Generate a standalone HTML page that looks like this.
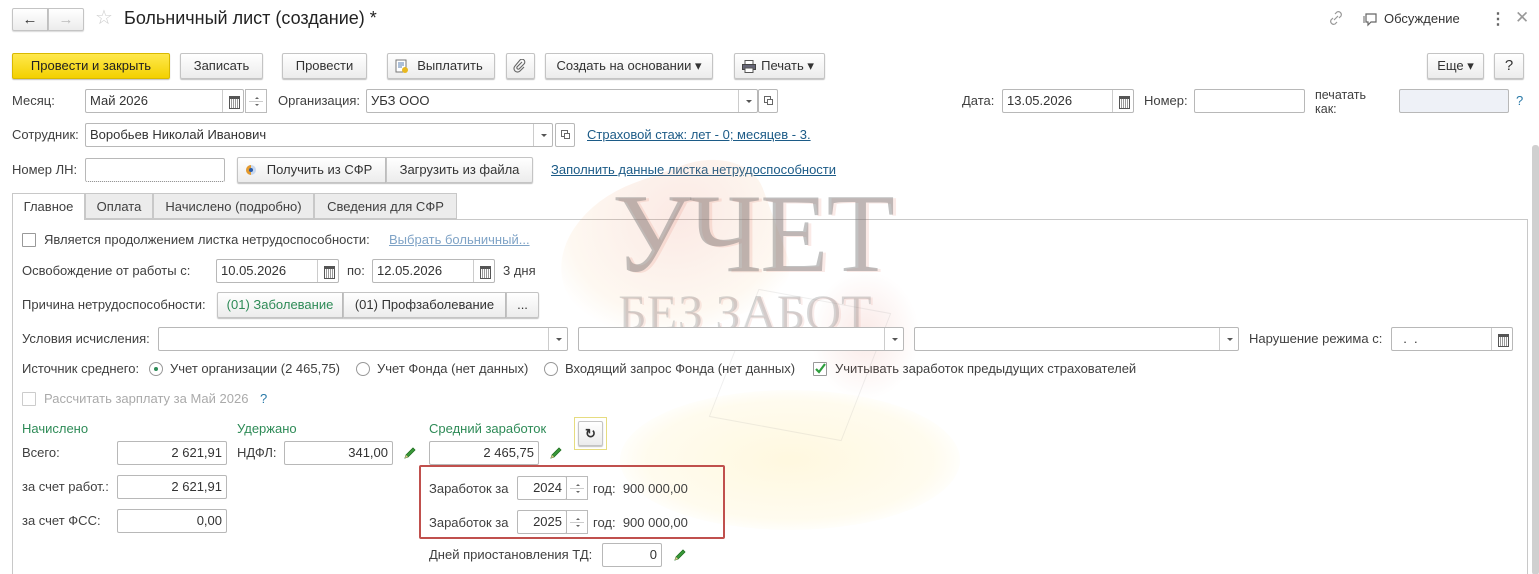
<!DOCTYPE html>
<html><head><meta charset="utf-8">
<style>
*{box-sizing:border-box;margin:0;padding:0}
html,body{width:1539px;height:574px;overflow:hidden}
body{background:#fff;font-family:"Liberation Sans",Arial,sans-serif;font-size:13px;color:#404040;position:relative}
.a{position:absolute;white-space:nowrap}
.l{position:absolute;white-space:nowrap;line-height:16px}
.in{position:absolute;height:24px;border:1px solid #b8b8b8;border-radius:2px;background:#fff;padding:0 4px;line-height:22px;color:#333;z-index:2}
.in.r{text-align:right}
.btn{position:absolute;height:26px;border:1px solid #c4c4c4;border-radius:2px;background:linear-gradient(#fff,#ececec);box-shadow:0 1px 1px rgba(0,0,0,.25);text-align:center;line-height:24px;color:#333;z-index:2}
.dd{position:absolute;top:0;right:0;width:19px;height:22px;border-left:1px solid #ccc}
.dd:after{content:"";position:absolute;left:7px;top:10px;border:3px solid transparent;border-top:3px solid #555}
.cal{position:absolute;top:0;right:0;width:21px;height:22px;border-left:1px solid #ccc}
.cal:before{content:"";position:absolute;left:6px;top:6px;width:9px;height:9px;border:1px solid #555;border-top:3px solid #555;background:repeating-linear-gradient(90deg,#fff 0 1px,#999 1px 2px)}
.lnk{color:#1c5b87;text-decoration:underline}
.grn{color:#2e8b57}
.cb{position:absolute;width:14px;height:14px;border:1px solid #999;background:#fff;border-radius:1px;z-index:2}
.rad{position:absolute;width:14px;height:14px;border:1px solid #999;border-radius:50%;background:#fff;z-index:2}
.spin{position:absolute;width:22px;height:24px;border:1px solid #bbb;background:#fff;z-index:2}
.spin:before{content:"";position:absolute;left:9px;top:5px;border:2px solid transparent;border-bottom:2px solid #666}
.spin:after{content:"";position:absolute;left:9px;top:14px;border:2px solid transparent;border-top:2px solid #666}
.spin i{position:absolute;left:3px;right:3px;top:11px;border-top:1px solid #ccc}
.pen{position:absolute;width:14px;height:14px;z-index:2}
.wm{position:absolute;z-index:1;pointer-events:none}
</style></head><body>

<!-- watermark -->
<div class="wm" style="left:620px;top:390px;width:340px;height:140px;border-radius:50%;background:radial-gradient(ellipse,rgba(255,232,150,.3),rgba(255,225,120,.12) 60%,rgba(255,255,255,0) 75%)"></div>
<div class="wm" style="left:560px;top:175px;width:220px;height:160px;border-radius:60% 40% 30% 70%;background:radial-gradient(ellipse at 60% 30%,rgba(230,120,90,.16),rgba(240,170,80,.08) 60%,rgba(255,255,255,0) 75%);transform:rotate(-20deg)"></div>
<div class="wm" style="left:810px;top:270px;width:110px;height:130px;border-radius:50%;background:radial-gradient(ellipse,rgba(220,110,90,.15),rgba(255,255,255,0) 70%)"></div>
<div class="wm" style="left:730px;top:300px;width:140px;height:130px;border:1px solid rgba(150,150,150,.15);transform:skewX(-12deg) rotate(10deg)"></div>
<div class="wm" style="left:612px;top:170px;font-family:'Liberation Serif',serif;font-size:112px;color:rgba(120,120,120,.45);letter-spacing:-2px;text-shadow:3px 1px 0 rgba(210,80,60,.12)">УЧЕТ</div>
<div class="wm" style="left:618px;top:283px;font-family:'Liberation Serif',serif;font-size:50px;color:rgba(140,140,140,.35);text-shadow:2px 1px 0 rgba(210,80,60,.1)">БЕЗ ЗАБОТ</div>

<!-- title bar -->
<div class="btn" style="left:12px;top:8px;width:36px;height:23px;line-height:21px;font-size:15px;border-radius:2px 0 0 2px;box-shadow:0 1px 1px rgba(0,0,0,.15)">&#8592;</div>
<div class="btn" style="left:48px;top:8px;width:36px;height:23px;line-height:21px;font-size:15px;color:#bbb;border-radius:0 2px 2px 0;box-shadow:0 1px 1px rgba(0,0,0,.15)">&#8594;</div>
<div class="a" style="left:95px;top:5px;font-size:20px;color:#ccc">&#9734;</div>
<div class="a" style="left:124px;top:8px;font-size:18px;color:#222">Больничный лист (создание) *</div>
<svg class="a" style="left:1328px;top:10px" width="16" height="16" viewBox="0 0 16 16"><path d="M6 10l4-4M7 4l2-2a3 3 0 014 4l-2 2M9 12l-2 2a3 3 0 01-4-4l2-2" stroke="#999" fill="none" stroke-width="1.2"/></svg>
<svg class="a" style="left:1362px;top:11px" width="16" height="16" viewBox="0 0 16 16"><path d="M4 3h10v8H9l-3 3v-3H4z" stroke="#666" fill="none" stroke-width="1.2"/><path d="M2 5v7" stroke="#666"/></svg>
<div class="a" style="left:1384px;top:11px;color:#333">Обсуждение</div>
<div class="a" style="left:1490px;top:9px;font-size:16px;color:#666;font-weight:bold">&#8942;</div>
<div class="a" style="left:1515px;top:8px;font-size:17px;color:#999">&#10005;</div>

<!-- toolbar -->
<div class="btn" style="left:12px;top:53px;width:158px;background:linear-gradient(#ffe84d,#f3d100);border-color:#d9b900;color:#222">Провести и закрыть</div>
<div class="btn" style="left:180px;top:53px;width:83px">Записать</div>
<div class="btn" style="left:282px;top:53px;width:85px">Провести</div>
<div class="btn" style="left:387px;top:53px;width:108px;padding-left:18px">Выплатить</div>
<svg class="a" style="left:395px;top:59px;z-index:3" width="14" height="15" viewBox="0 0 14 15"><rect x="1" y="1" width="10" height="12" fill="#fff" stroke="#777"/><path d="M3 4h6M3 6h6M3 8h4" stroke="#5a7fb0"/><circle cx="10" cy="11" r="3" fill="#e8b820"/></svg>
<div class="btn" style="left:506px;top:53px;width:29px"></div>
<svg class="a" style="left:513px;top:59px;z-index:3" width="14" height="14" viewBox="0 0 14 14"><path d="M9 3L4 8a1.5 1.5 0 002 2l5-5a2.5 2.5 0 00-4-4L2 7a3.5 3.5 0 005 5l4-4" stroke="#666" fill="none" stroke-width="1.1"/></svg>
<div class="btn" style="left:545px;top:53px;width:168px">Создать на основании &#9662;</div>
<div class="btn" style="left:734px;top:53px;width:91px;padding-left:16px">Печать &#9662;</div>
<svg class="a" style="left:742px;top:60px;z-index:3" width="14" height="13" viewBox="0 0 14 13"><rect x="3" y="0.5" width="8" height="4" fill="#fff" stroke="#555"/><rect x="0.5" y="4.5" width="13" height="5" fill="#667" stroke="#444"/><rect x="3" y="8" width="8" height="4.5" fill="#fff" stroke="#555"/></svg>
<div class="btn" style="left:1427px;top:53px;width:57px">Еще &#9662;</div>
<div class="btn" style="left:1494px;top:53px;width:30px;font-size:15px">?</div>

<!-- row 1 -->
<div class="l" style="left:12px;top:93px">Месяц:</div>
<div class="in" style="left:85px;top:89px;width:159px">Май 2026<span class="cal"></span></div>
<div class="spin" style="left:245px;top:89px"><i></i></div>
<div class="l" style="left:278px;top:93px">Организация:</div>
<div class="in" style="left:366px;top:89px;width:392px">УБЗ ООО<span class="dd"></span></div>
<div class="in" style="left:758px;top:89px;width:20px;padding:0"><span style="position:absolute;left:5px;top:6px;width:7px;height:7px;border:1px solid #666"></span><span style="position:absolute;left:8px;top:9px;width:6px;height:6px;border:1px solid #666;background:#fff"></span></div>
<div class="l" style="left:962px;top:93px">Дата:</div>
<div class="in" style="left:1002px;top:89px;width:132px">13.05.2026<span class="cal"></span></div>
<div class="l" style="left:1144px;top:93px">Номер:</div>
<div class="in" style="left:1194px;top:89px;width:111px"></div>
<div class="l" style="left:1315px;top:88px;line-height:14px;font-size:12.5px">печатать<br>как:</div>
<div class="in" style="left:1399px;top:89px;width:110px;background:#eef1f7"></div>
<div class="l" style="left:1516px;top:93px;color:#2a7aa8">?</div>

<!-- row 2 -->
<div class="l" style="left:12px;top:127px">Сотрудник:</div>
<div class="in" style="left:85px;top:123px;width:468px">Воробьев Николай Иванович<span class="dd"></span></div>
<div class="in" style="left:555px;top:123px;width:20px;padding:0"><span style="position:absolute;left:5px;top:6px;width:7px;height:7px;border:1px solid #666"></span><span style="position:absolute;left:8px;top:9px;width:6px;height:6px;border:1px solid #666;background:#fff"></span></div>
<div class="l lnk" style="left:587px;top:127px">Страховой стаж: лет - 0; месяцев - 3.</div>

<!-- row 3 -->
<div class="l" style="left:12px;top:162px">Номер ЛН:</div>
<div class="in" style="left:85px;top:158px;width:140px;border-bottom:1px dotted #888"></div>
<div class="btn" style="left:237px;top:157px;width:149px;padding-left:16px;border-radius:2px 0 0 2px">Получить из СФР</div>
<svg class="a" style="left:245px;top:164px;z-index:3" width="12" height="12" viewBox="0 0 12 12"><circle cx="6" cy="6" r="5" fill="#c8d8ef"/><path d="M6 1a5 5 0 000 10" fill="#e59a2c"/><circle cx="6" cy="6" r="2" fill="#2a5ca8"/></svg>
<div class="btn" style="left:386px;top:157px;width:147px;border-radius:0 2px 2px 0">Загрузить из файла</div>
<div class="l lnk" style="left:551px;top:162px">Заполнить данные листка нетрудоспособности</div>

<!-- tabs -->
<div style="position:absolute;left:12px;top:219px;width:1516px;height:380px;border:1px solid #c8c8c8;z-index:0"></div>
<div class="a" style="left:12px;top:193px;width:73px;height:27px;border:1px solid #c8c8c8;border-bottom:none;background:#fff;text-align:center;line-height:26px;z-index:2">Главное</div>
<div class="a" style="left:85px;top:193px;width:68px;height:26px;border:1px solid #c8c8c8;background:#ececec;text-align:center;line-height:25px;z-index:2">Оплата</div>
<div class="a" style="left:153px;top:193px;width:161px;height:26px;border:1px solid #c8c8c8;background:#ececec;text-align:center;line-height:25px;z-index:2">Начислено (подробно)</div>
<div class="a" style="left:314px;top:193px;width:143px;height:26px;border:1px solid #c8c8c8;background:#ececec;text-align:center;line-height:25px;z-index:2">Сведения для СФР</div>
<div style="position:absolute;left:1532px;top:145px;width:7px;height:430px;background:#d0d0d0;border-radius:3px"></div>

<!-- panel content -->
<div class="cb" style="left:22px;top:233px"></div>
<div class="l" style="left:44px;top:232px">Является продолжением листка нетрудоспособности:</div>
<div class="l" style="left:389px;top:232px;color:#7fa3c6;text-decoration:underline">Выбрать больничный...</div>

<div class="l" style="left:22px;top:263px">Освобождение от работы с:</div>
<div class="in" style="left:216px;top:259px;width:123px">10.05.2026<span class="cal"></span></div>
<div class="l" style="left:347px;top:263px">по:</div>
<div class="in" style="left:372px;top:259px;width:123px">12.05.2026<span class="cal"></span></div>
<div class="l" style="left:503px;top:263px">3 дня</div>

<div class="l" style="left:22px;top:297px">Причина нетрудоспособности:</div>
<div class="btn" style="left:217px;top:292px;width:126px;color:#2e8b57;border-radius:2px 0 0 2px">(01) Заболевание</div>
<div class="btn" style="left:343px;top:292px;width:163px;border-radius:0">(01) Профзаболевание</div>
<div class="btn" style="left:506px;top:292px;width:33px;border-radius:0 2px 2px 0">...</div>

<div class="l" style="left:22px;top:331px">Условия исчисления:</div>
<div class="in" style="left:158px;top:327px;width:410px"><span class="dd"></span></div>
<div class="in" style="left:578px;top:327px;width:326px"><span class="dd"></span></div>
<div class="in" style="left:914px;top:327px;width:325px"><span class="dd"></span></div>
<div class="l" style="left:1249px;top:331px">Нарушение режима с:</div>
<div class="in" style="left:1391px;top:327px;width:122px">&nbsp;&nbsp;.&nbsp;&nbsp;.<span class="cal"></span></div>

<div class="l" style="left:22px;top:361px">Источник среднего:</div>
<div class="rad" style="left:149px;top:362px"><span style="position:absolute;left:4px;top:4px;width:4px;height:4px;border-radius:50%;background:#2e8b57"></span></div>
<div class="l" style="left:170px;top:361px">Учет организации (2 465,75)</div>
<div class="rad" style="left:356px;top:362px"></div>
<div class="l" style="left:377px;top:361px">Учет Фонда (нет данных)</div>
<div class="rad" style="left:544px;top:362px"></div>
<div class="l" style="left:565px;top:361px">Входящий запрос Фонда (нет данных)</div>
<div class="cb" style="left:813px;top:362px"><svg style="position:absolute;left:0;top:0" width="12" height="12" viewBox="0 0 12 12"><path d="M2 6l3 3 6-8" stroke="#2e9e3e" stroke-width="2.2" fill="none"/></svg></div>
<div class="l" style="left:835px;top:361px">Учитывать заработок предыдущих страхователей</div>

<div class="cb" style="left:22px;top:392px;border-color:#ccc"></div>
<div class="l" style="left:44px;top:391px;color:#aaa">Рассчитать зарплату за Май 2026</div>
<div class="l" style="left:260px;top:391px;color:#2a7aa8">?</div>

<div class="l grn" style="left:22px;top:421px">Начислено</div>
<div class="l grn" style="left:237px;top:421px">Удержано</div>
<div class="l grn" style="left:429px;top:421px">Средний заработок</div>
<div class="a" style="left:574px;top:417px;width:33px;height:33px;border:1px solid #e6dc80;z-index:2;background:#fff"><div class="btn" style="left:3px;top:3px;width:25px;height:25px;line-height:23px;font-size:13px;font-weight:bold">&#8635;</div></div>

<div class="l" style="left:22px;top:445px">Всего:</div>
<div class="in r" style="left:117px;top:441px;width:110px">2 621,91</div>
<div class="l" style="left:237px;top:445px">НДФЛ:</div>
<div class="in r" style="left:284px;top:441px;width:109px">341,00</div>
<svg class="pen" style="left:403px;top:446px" viewBox="0 0 14 14"><path d="M2 12l1-3 7-7 2 2-7 7z" fill="#3a9a3a" stroke="#1e6e1e" stroke-width=".8"/><path d="M2 12l1-3 2 2z" fill="#e8c890"/></svg>
<div class="in r" style="left:429px;top:441px;width:110px">2 465,75</div>
<svg class="pen" style="left:549px;top:446px" viewBox="0 0 14 14"><path d="M2 12l1-3 7-7 2 2-7 7z" fill="#3a9a3a" stroke="#1e6e1e" stroke-width=".8"/><path d="M2 12l1-3 2 2z" fill="#e8c890"/></svg>

<div class="l" style="left:22px;top:479px">за счет работ.:</div>
<div class="in r" style="left:117px;top:475px;width:110px">2 621,91</div>
<div class="l" style="left:22px;top:513px">за счет ФСС:</div>
<div class="in r" style="left:117px;top:509px;width:110px">0,00</div>

<div class="a" style="left:419px;top:465px;width:306px;height:74px;border:2px solid #c0504d;border-radius:2px;z-index:3"></div>
<div class="l" style="left:429px;top:481px;z-index:3">Заработок за</div>
<div class="in r" style="left:517px;top:476px;width:50px">2024</div>
<div class="spin" style="left:566px;top:476px"><i></i></div>
<div class="l" style="left:593px;top:481px;z-index:3">год:&nbsp; 900 000,00</div>
<div class="l" style="left:429px;top:515px;z-index:3">Заработок за</div>
<div class="in r" style="left:517px;top:510px;width:50px">2025</div>
<div class="spin" style="left:566px;top:510px"><i></i></div>
<div class="l" style="left:593px;top:515px;z-index:3">год:&nbsp; 900 000,00</div>

<div class="l" style="left:429px;top:547px">Дней приостановления ТД:</div>
<div class="in r" style="left:602px;top:543px;width:60px">0</div>
<svg class="pen" style="left:673px;top:548px" viewBox="0 0 14 14"><path d="M2 12l1-3 7-7 2 2-7 7z" fill="#3a9a3a" stroke="#1e6e1e" stroke-width=".8"/><path d="M2 12l1-3 2 2z" fill="#e8c890"/></svg>
</body></html>
